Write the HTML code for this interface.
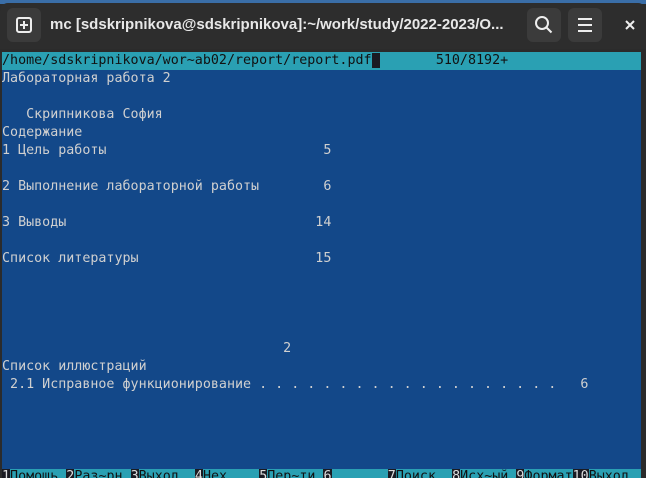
<!DOCTYPE html><html><head><meta charset="utf-8"><style>
body{margin:0;width:646px;height:478px;background:#2b2b2b;overflow:hidden;position:relative;font-family:"Liberation Sans","DejaVu Sans",sans-serif}
.top{position:absolute;left:0;top:0;width:646px;height:4px;background:#3a6ea8}
.bar{position:absolute;left:0;top:3px;width:646px;height:46px;background:#2d2d2d;border-radius:8px 8px 0 0}
.btn{position:absolute;top:8px;width:34px;height:34px;background:#3b3b3b;border-radius:6px}
.title{position:absolute;left:50px;top:16px;color:#e8e8e8;font-size:15px;font-weight:bold}
.term{position:absolute;left:2px;top:52px;width:639px;height:426px;background:#134889;font-family:"DejaVu Sans Mono","Liberation Mono",monospace;font-size:13.35px;color:#d0d0d0;overflow:hidden}
.row{position:absolute;left:0;height:18px;line-height:18px;white-space:pre}
.t{background:#2aa0b3;color:#111}
.k{background:#1a1a22;color:#ddd}
</style></head><body>
<div class="top"></div><div class="bar"></div>
<div class="btn" style="left:7px"><svg width="34" height="34"><rect x="10" y="10" width="14" height="14" rx="2" fill="none" stroke="#eee" stroke-width="2"/><path d="M17 13v8M13 17h8" stroke="#eee" stroke-width="2"/></svg></div>
<div class="title">mc [sdskripnikova@sdskripnikova]:~/work/study/2022-2023/O...</div>
<div class="btn" style="left:527px"><svg width="34" height="34"><circle cx="15" cy="15" r="6" fill="none" stroke="#eee" stroke-width="2"/><path d="M19.5 19.5l5 5" stroke="#eee" stroke-width="2"/></svg></div>
<div class="btn" style="left:568px"><svg width="34" height="34"><path d="M10 11h14M10 17h14M10 23h14" stroke="#eee" stroke-width="2"/></svg></div>
<svg style="position:absolute;left:624px;top:19px" width="12" height="12"><path d="M2 2l8 8M10 2l-8 8" stroke="#eee" stroke-width="2"/></svg>
<div class="term">
<div class="row t" style="top:0;width:639px">/home/sdskripnikova/wor~ab02/report/report.pdf<span class="k"> </span>       510/8192+</div>
<div class="row" style="top:18px">Лабораторная работа 2</div>
<div class="row" style="top:54px">   Скрипникова София</div>
<div class="row" style="top:72px">Содержание</div>
<div class="row" style="top:90px">1 Цель работы                           5</div>
<div class="row" style="top:126px">2 Выполнение лабораторной работы        6</div>
<div class="row" style="top:162px">3 Выводы                               14</div>
<div class="row" style="top:198px">Список литературы                      15</div>
<div class="row" style="top:288px">                                   2</div>
<div class="row" style="top:306px">Список иллюстраций</div>
<div class="row" style="top:324px"> 2.1 Исправное функционирование . . . . . . . . . . . . . . . . . . .   6</div>
<div class="row" style="top:416px"><span class="k">1</span><span class="t">Помощь </span><span class="k">2</span><span class="t">Раз~рн </span><span class="k">3</span><span class="t">Выход  </span><span class="k">4</span><span class="t">Hex    </span><span class="k">5</span><span class="t">Пер~ти </span><span class="k">6</span><span class="t">       </span><span class="k">7</span><span class="t">Поиск  </span><span class="k">8</span><span class="t">Исх~ый </span><span class="k">9</span><span class="t">Формат</span><span class="k">10</span><span class="t">Выход  </span></div>
</div>
</body></html>
